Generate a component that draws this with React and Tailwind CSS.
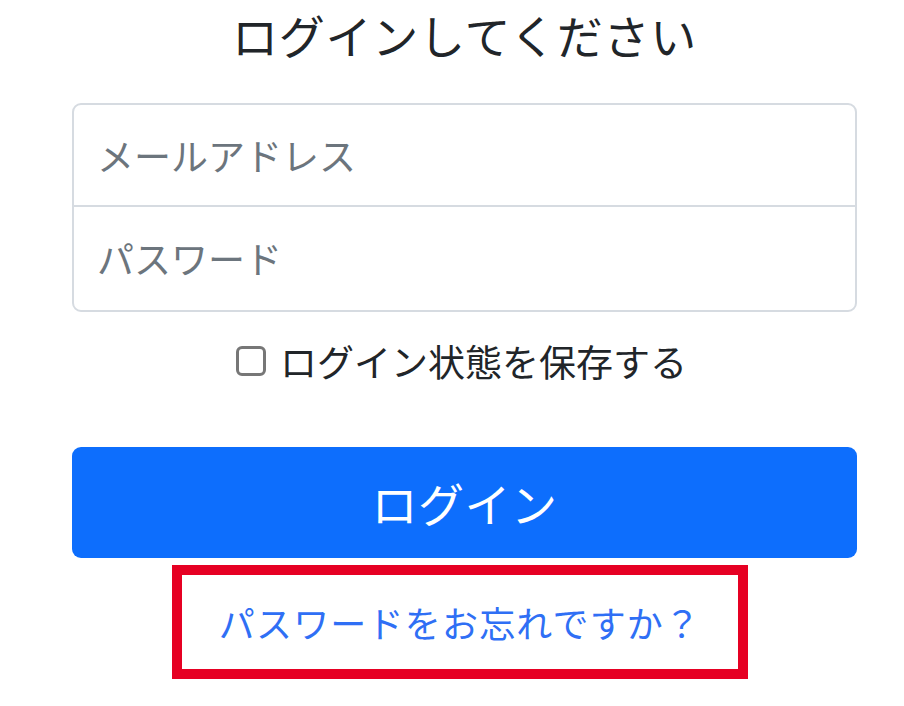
import React, { useState } from 'react';

const jp = { fontFamily: '"Noto Sans CJK JP", "Noto Sans", sans-serif' };

export default function App() {
  const [remember, setRemember] = useState(false);

  return (
    <div className="w-[904px] h-[706px] bg-white text-[#212529]" style={jp}>
      <div className="ml-[72px] w-[785px] flex flex-col">
        {/* Title */}
        <h1 className="pt-[4px] h-[68px] text-center text-[46px] leading-[60px] font-normal tracking-[0.8px]">
          ログインしてください
        </h1>

        {/* Inputs */}
        <div className="mt-[35px] h-[209px] border-2 border-[#d6dbe1] rounded-[9px] flex flex-col">
          <input
            type="email"
            placeholder="メールアドレス"
            className="h-[102px] pl-[23px] pr-[22px] text-[37px] bg-transparent outline-none placeholder:text-[#6c757d] border-b-2 border-[#d6dbe1]"
          />
          <input
            type="password"
            placeholder="パスワード"
            className="flex-1 pl-[23px] pr-[22px] text-[37px] bg-transparent outline-none placeholder:text-[#6c757d]"
          />
        </div>

        {/* Remember */}
        <label className="mt-[29px] h-[40px] flex items-center justify-center gap-[14px] text-[37px] leading-[40px] cursor-pointer">
          <span
            onClick={() => setRemember(!remember)}
            className="-ml-[6px] w-[30px] h-[30px] border-[3px] border-[#777] rounded-[6px] bg-white"
          />
          <span>ログイン状態を保存する</span>
        </label>

        {/* Button */}
        <button className="mt-[66px] h-[111px] w-full rounded-[9px] bg-[#0d6efd] text-white text-[46px] tracking-[0.5px]">
          ログイン
        </button>

        {/* Forgot */}
        <div className="mt-[7px] ml-[100px] w-[576px] h-[114px] border-[10px] border-[#e60023] flex items-center justify-center">
          <a href="#" className="text-[#2f6ff5] text-[36px] tracking-[1.2px]">
            パスワードをお忘れですか？
          </a>
        </div>
      </div>
    </div>
  );
}
